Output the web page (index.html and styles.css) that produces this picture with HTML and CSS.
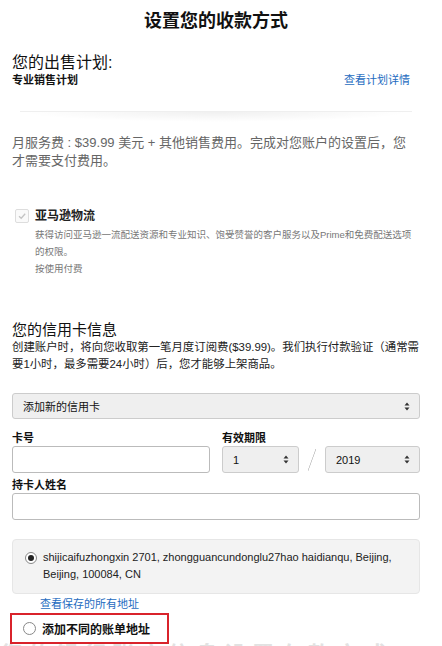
FILE: index.html
```html
<!DOCTYPE html>
<html lang="zh-CN">
<head>
    <meta charset="UTF-8">
    <title>设置您的收款方式</title>
    <link rel="stylesheet" href="styles.css">
</head>
<body>
    <div class="page">
        <h1 class="title">设置您的收款方式</h1>

        <!-- 出售计划 -->
        <section class="plan">
            <div class="plan-label">您的出售计划:</div>
            <div class="plan-row">
                <span class="plan-name">专业销售计划</span>
                <a href="#" class="link">查看计划详情</a>
            </div>
        </section>

        <div class="divider"></div>

        <p class="fee">月服务费 : $39.99 美元 + 其他销售费用。完成对您账户的设置后，您才需要支付费用。</p>

        <div class="fba">
            <span class="check">
                <svg width="12" height="12" viewBox="0 0 12 12"><path d="M3 6.3 L5.2 8.3 L9.2 3.8" fill="none" stroke="#c4c4c4" stroke-width="1.3"/></svg>
            </span>
            <div class="fba-body">
                <div class="fba-title">亚马逊物流</div>
                <p class="fba-text">获得访问亚马逊一流配送资源和专业知识、饱受赞誉的客户服务以及Prime和免费配送选项的权限。</p>
                <p class="fba-text">按使用付费</p>
            </div>
        </div>

        <!-- 信用卡 -->
        <section class="card">
            <h2 class="card-title">您的信用卡信息</h2>
            <p class="card-text">创建账户时，将向您收取第一笔月度订阅费($39.99)。我们执行付款验证（通常需要1小时，最多需要24小时）后，您才能够上架商品。</p>

            <div class="select select-wide">添加新的信用卡<svg class="arrows" width="6" height="9" viewBox="0 0 6 9"><path d="M3 0.5 L5.5 3.5 H0.5 Z M3 8.5 L5.5 5.5 H0.5 Z" fill="#333"/></svg></div>

            <div class="row">
                <div class="field field-num">
                    <label>卡号</label>
                    <div class="input"></div>
                </div>
                <div class="field">
                    <label>有效期限</label>
                    <div class="expiry">
                        <div class="select select-month">1<svg class="arrows" width="6" height="9" viewBox="0 0 6 9"><path d="M3 0.5 L5.5 3.5 H0.5 Z M3 8.5 L5.5 5.5 H0.5 Z" fill="#333"/></svg></div>
                        <span class="slash"></span>
                        <div class="select select-year">2019<svg class="arrows" width="6" height="9" viewBox="0 0 6 9"><path d="M3 0.5 L5.5 3.5 H0.5 Z M3 8.5 L5.5 5.5 H0.5 Z" fill="#333"/></svg></div>
                    </div>
                </div>
            </div>

            <div class="field">
                <label>持卡人姓名</label>
                <div class="input"></div>
            </div>

            <div class="address">
                <span class="radio checked"></span>
                <span>shijicaifuzhongxin 2701, zhongguancundonglu27hao haidianqu, Beijing, Beijing, 100084, CN</span>
            </div>
            <a href="#" class="link addr-link">查看保存的所有地址</a>

            <div class="other">
                <span class="radio"></span>
                <span class="other-text">添加不同的账单地址</span>
            </div>
            <div class="next">您的银行账户信息设置存款方式</div>
        </section>
    </div>
</body>
</html>
```

FILE: styles.css
```css
body {
    margin: 0;
    font-family: "Liberation Sans", Arial, "Noto Sans CJK SC", sans-serif;
    color: #111;
    background-color: #fff;
    overflow: hidden;
}

.page {
    width: 408px;
    margin-left: 12px;
}

.title {
    margin: 9px 0 0;
    font-size: 18px;
    line-height: 24px;
    text-align: center;
}

.plan {
    margin-top: 20px;
}

.plan-label {
    font-size: 16px;
    line-height: 20px;
}

.plan-row {
    display: flex;
    justify-content: space-between;
    align-items: center;
    padding-right: 10px;
    font-size: 11px;
    line-height: 14px;
}

.plan-name {
    font-weight: bold;
}

.link {
    color: #1e6cbf;
    text-decoration: none;
    font-size: 11px;
}

/* 阴影分隔线 */
.divider {
    height: 10px;
    margin: 24px 8px 0;
    background: radial-gradient(ellipse at top, rgba(0,0,0,0.06), rgba(0,0,0,0) 70%);
    border-top: 1px solid #efefef;
}

.fee {
    width: 400px;
    margin: 12px 0 0;
    font-size: 13px;
    line-height: 18px;
    color: #666;
}

.fba {
    display: flex;
    gap: 6px;
    margin-top: 38px;
    margin-left: 3px;
}

.check {
    flex: none;
    width: 12px;
    height: 12px;
    border: 1px solid #ddd;
    border-radius: 2px;
    margin-top: 1px;
    display: flex;
    background: #fafafa;
}

.fba-title {
    font-size: 12px;
    line-height: 16px;
    font-weight: bold;
    color: #222;
}

.fba-text {
    width: 380px;
    margin: 2px 0 0;
    font-size: 9.5px;
    line-height: 17px;
    color: #777;
}

.fba-text + .fba-text {
    margin-top: 0;
}

.card {
    margin-top: 44px;
}

.card-title {
    margin: 0;
    font-size: 15px;
    line-height: 18px;
    font-weight: normal;
}

.card-text {
    margin: 0;
    font-size: 11.4px;
    line-height: 17px;
    color: #222;
}

.select {
    display: flex;
    justify-content: space-between;
    align-items: center;
    box-sizing: border-box;
    height: 26px;
    padding: 0 9px 0 10px;
    background: #efefef;
    border: 1px solid #ccc;
    border-radius: 3px;
    font-size: 11px;
}

.select-wide {
    margin-top: 20px;
}

.row {
    display: flex;
    gap: 12px;
    margin-top: 12px;
}

.field label {
    display: block;
    font-size: 11px;
    font-weight: bold;
    line-height: 14px;
    margin-bottom: 1px;
}

.field-num {
    width: 198px;
}

.input {
    box-sizing: border-box;
    height: 27px;
    border: 1px solid #bbb;
    border-radius: 3px;
    background: #fff;
}

.row + .field {
    margin-top: 5px;
}

.expiry {
    display: flex;
    align-items: center;
}

.select-month {
    width: 77px;
    height: 27px;
}

.select-year {
    width: 95px;
    height: 27px;
}

.slash {
    width: 26px;
    height: 22px;
    background: linear-gradient(to top left, transparent 46%, #ccc 49%, #ccc 52%, transparent 55%);
    background-size: 8px 22px;
    background-repeat: no-repeat;
    background-position: center;
}

.address {
    display: flex;
    gap: 6px;
    margin-top: 19px;
    padding: 9px 12px 10px;
    background: #f3f3f3;
    border: 1px solid #e6e6e6;
    border-radius: 4px;
    font-size: 11px;
    line-height: 17px;
    color: #222;
}

.address .radio {
    margin-top: 3px;
}

.radio {
    flex: none;
    width: 10px;
    height: 10px;
    border: 1px solid #888;
    border-radius: 50%;
    background: #fff;
    position: relative;
}

.radio.checked::after {
    content: '';
    position: absolute;
    top: 2px;
    left: 2px;
    width: 6px;
    height: 6px;
    border-radius: 50%;
    background: #222;
}

.addr-link {
    display: block;
    margin: 2px 0 0 28px;
    line-height: 16px;
}

.other {
    display: flex;
    align-items: center;
    gap: 6px;
    width: 159px;
    height: 31px;
    box-sizing: border-box;
    margin-left: -2px;
    margin-top: 1px;
    padding-left: 11px;
    border: 2px solid #d9232b;
    position: relative;
    z-index: 1;
    background: #fff;
}

.other .radio {
    width: 11px;
    height: 11px;
}

.other-text {
    font-size: 12px;
    font-weight: bold;
}

.next {
    margin: -8px 0 0 -12px;
    white-space: nowrap;
    font-size: 22px;
    font-weight: bold;
    color: #e2e2e2;
    letter-spacing: 6px;
}
```
